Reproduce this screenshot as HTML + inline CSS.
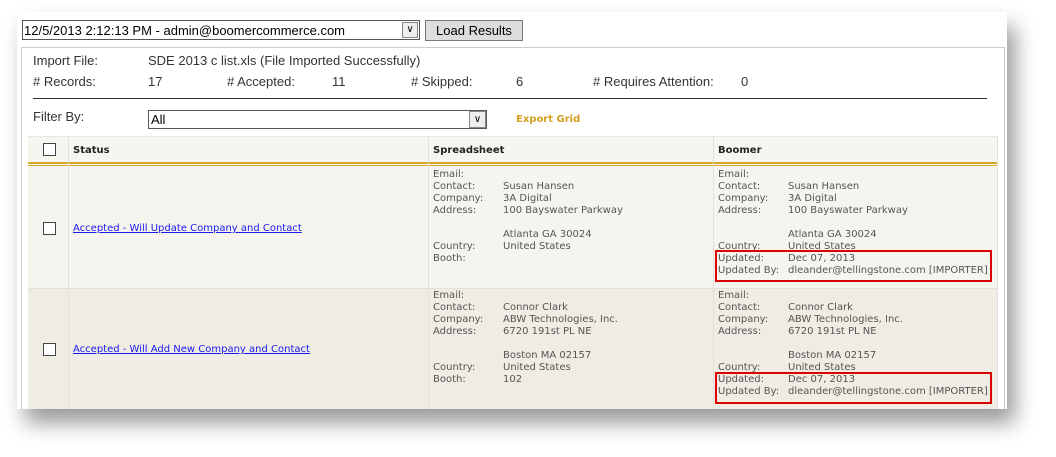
<!DOCTYPE html>
<html><head><style>
*{margin:0;padding:0;box-sizing:border-box}
body{width:1056px;height:457px;background:#fff;position:relative;overflow:hidden;font-family:"Liberation Sans",sans-serif}
.a{position:absolute;white-space:nowrap}
.s{font-size:13px;color:#333}
.t{font-family:"DejaVu Sans",sans-serif;font-size:10px;color:#555;line-height:12px}
.cb{position:absolute;width:13px;height:13px;border:1px solid #444;background:#fff}
.red{position:absolute;border:2px solid #d00}
</style></head><body>
<div class="a" style="left:17px;top:12px;width:990px;height:397px;background:#fff;box-shadow:8px 14px 20px rgba(0,0,0,.4)"></div>
<div class="a" style="left:22px;top:20px;width:398px;height:20px;border:1px solid #555;background:#fff;font-size:13px;padding:2px 1px;color:#000">12/5/2013 2:12:13 PM - admin@boomercommerce.com</div>
<div class="a" style="left:402px;top:22px;width:16px;height:16px;border:1px solid #888;background:#eee;font-size:10px;text-align:center;line-height:14px">&#8744;</div>
<div class="a" style="left:425px;top:20px;width:98px;height:21px;border:1px solid #777;background:#ddd;font-size:13px;text-align:center;line-height:19px;color:#000">Load Results</div>
<div class="a" style="left:21px;top:47px;width:984px;height:362px;border:1px solid #ccc;border-bottom:none;background:#fff"></div>
<div class="a s" style="left:33px;top:53px">Import File:</div>
<div class="a s" style="left:148px;top:53px">SDE 2013 c list.xls (File Imported Successfully)</div>
<div class="a s" style="left:33px;top:74px"># Records:</div>
<div class="a s" style="left:148px;top:74px">17</div>
<div class="a s" style="left:227px;top:74px"># Accepted:</div>
<div class="a s" style="left:332px;top:74px">11</div>
<div class="a s" style="left:411px;top:74px"># Skipped:</div>
<div class="a s" style="left:516px;top:74px">6</div>
<div class="a s" style="left:593px;top:74px"># Requires Attention:</div>
<div class="a s" style="left:741px;top:74px">0</div>
<div class="a" style="left:33px;top:98px;width:954px;height:1px;background:#333"></div>
<div class="a s" style="left:33px;top:109px">Filter By:</div>
<div class="a" style="left:148px;top:110px;width:339px;height:19px;border:1px solid #555;background:#fff;font-size:13px;padding:1px 2px;color:#000">All</div>
<div class="a" style="left:469px;top:111px;width:17px;height:17px;border:1px solid #888;background:#eee;font-size:10px;text-align:center;line-height:15px">&#8744;</div>
<div class="a" style="left:516px;top:114px;font-family:'DejaVu Sans',sans-serif;font-size:10px;font-weight:bold;color:#d4a020">Export Grid</div>
<div class="a" style="left:28px;top:136px;width:970px;height:27px;background:#f6f5f0;border-top:1px solid #e6e6e6"></div>
<div class="a" style="left:28px;top:162px;width:970px;height:2px;background:#d9a82a"></div>
<div class="a" style="left:28px;top:165px;width:970px;height:1px;background:#d9a82a"></div>
<div class="a" style="left:28px;top:167px;width:970px;height:121px;background:#f5f4ef"></div>
<div class="a" style="left:28px;top:289px;width:970px;height:120px;background:#eeece3"></div>
<div class="a" style="left:28px;top:288px;width:970px;height:1px;background:#e2e0d8"></div>
<div class="a" style="left:68px;top:136px;width:1px;height:273px;background:#e2e0d8"></div>
<div class="a" style="left:428px;top:136px;width:1px;height:273px;background:#e2e0d8"></div>
<div class="a" style="left:713px;top:136px;width:1px;height:273px;background:#e2e0d8"></div>
<div class="a" style="left:997px;top:136px;width:1px;height:273px;background:#e2e0d8"></div>
<div class="cb" style="left:43px;top:143px"></div>
<div class="a t" style="left:73px;top:145px;font-weight:bold;color:#222">Status</div>
<div class="a t" style="left:433px;top:145px;font-weight:bold;color:#222">Spreadsheet</div>
<div class="a t" style="left:718px;top:145px;font-weight:bold;color:#222">Boomer</div>
<div class="cb" style="left:43px;top:222px"></div>
<div class="a t" style="left:73px;top:223px;color:#1a1aee;text-decoration:underline">Accepted - Will Update Company and Contact</div>
<div class="cb" style="left:43px;top:343px"></div>
<div class="a t" style="left:73px;top:344px;color:#1a1aee;text-decoration:underline">Accepted - Will Add New Company and Contact</div>

<div class="a t" style="left:433px;top:169px">Email:<br>Contact:<br>Company:<br>Address:<br><br><br>Country:<br>Booth:</div>
<div class="a t" style="left:503px;top:169px"><br>Susan Hansen<br>3A Digital<br>100 Bayswater Parkway<br><br>Atlanta GA 30024<br>United States</div>
<div class="a t" style="left:718px;top:169px">Email:<br>Contact:<br>Company:<br>Address:<br><br><br>Country:<br>Updated:<br>Updated By:</div>
<div class="a t" style="left:788px;top:169px"><br>Susan Hansen<br>3A Digital<br>100 Bayswater Parkway<br><br>Atlanta GA 30024<br>United States<br>Dec 07, 2013<br>dleander@tellingstone.com [IMPORTER]</div>
<div class="red" style="left:715px;top:250px;width:277px;height:32px"></div>

<div class="a t" style="left:433px;top:290px">Email:<br>Contact:<br>Company:<br>Address:<br><br><br>Country:<br>Booth:</div>
<div class="a t" style="left:503px;top:290px"><br>Connor Clark<br>ABW Technologies, Inc.<br>6720 191st PL NE<br><br>Boston MA 02157<br>United States<br>102</div>
<div class="a t" style="left:718px;top:290px">Email:<br>Contact:<br>Company:<br>Address:<br><br><br>Country:<br>Updated:<br>Updated By:</div>
<div class="a t" style="left:788px;top:290px"><br>Connor Clark<br>ABW Technologies, Inc.<br>6720 191st PL NE<br><br>Boston MA 02157<br>United States<br>Dec 07, 2013<br>dleander@tellingstone.com [IMPORTER]</div>
<div class="red" style="left:715px;top:372px;width:277px;height:32px"></div>
</body></html>
